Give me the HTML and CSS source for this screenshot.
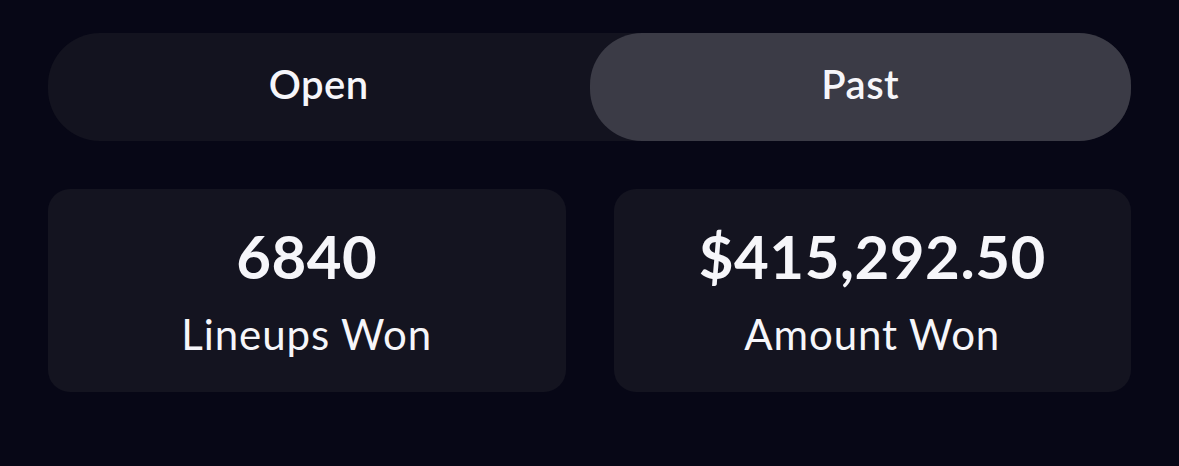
FILE: index.html
```html
<!DOCTYPE html>
<html lang="en">
<head>
<meta charset="utf-8">
<title>Stats</title>
<link rel="stylesheet" href="styles.css">
</head>
<body>
<main class="page">
  <div class="segmented">
    <button class="segment">Open</button>
    <button class="segment segment--active">Past</button>
  </div>
  <section class="stats">
    <div class="card">
      <div class="card__value">6840</div>
      <div class="card__label">Lineups Won</div>
    </div>
    <div class="card">
      <div class="card__value">$415,292.50</div>
      <div class="card__label">Amount Won</div>
    </div>
  </section>
</main>
</body>
</html>
```

FILE: styles.css
```css
* { box-sizing: border-box; }
html, body {
  margin: 0;
  padding: 0;
  background: #070716;
  height: 100%;
}
body {
  font-family: "Lato", "Noto Sans", sans-serif;
  color: #f6f6fa;
}
.page {
  padding: 33px 48px 0 48px;
  display: flex;
  flex-direction: column;
  gap: 48px;
}
.segmented {
  display: grid;
  grid-template-columns: 1fr 1fr;
  height: 108px;
  background: #13131f;
  border-radius: 52px;
}
.segment {
  border: 0;
  background: transparent;
  color: #f6f6fa;
  font-family: inherit;
  font-size: 40px;
  font-weight: 600;
  letter-spacing: 0.5px;
  border-radius: 52px;
  padding: 0 0 6px 0;
  display: flex;
  align-items: center;
  justify-content: center;
}
.segment--active {
  background: #3b3b46;
}
.stats {
  display: grid;
  grid-template-columns: 1fr 1fr;
  gap: 48px;
}
.card {
  height: 203px;
  background: #141420;
  border-radius: 22px;
  display: flex;
  flex-direction: column;
  align-items: center;
  justify-content: center;
  gap: 27px;
}
.card__value {
  font-size: 60px;
  line-height: 60px;
  font-weight: 700;
  letter-spacing: 0.5px;
}
.card__label {
  font-size: 42px;
  line-height: 42px;
  font-weight: 400;
  letter-spacing: 0.9px;
}
```
